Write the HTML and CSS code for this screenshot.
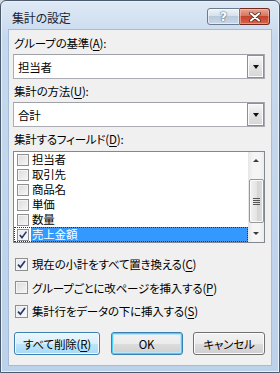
FILE: index.html
```html
<!DOCTYPE html>
<html lang="ja">
  <head>
    <meta charset="UTF-8" />
    <meta name="viewport" content="width=device-width, initial-scale=1.0" />
    <title>集計の設定</title>
    <link rel="stylesheet" href="styles.css">
  </head>
  <body>
    <div class="window">
      <div class="titlebar">
        <span class="title">集計の設定</span>
        <div class="caption">
          <div class="cap-btn help">?</div>
          <div class="cap-btn close">
            <svg width="14" height="10" viewBox="0 0 14 10">
              <path d="M3 1.5 L11 8.5 M11 1.5 L3 8.5" stroke="#4a1a10" stroke-width="3.6" stroke-linecap="round" />
              <path d="M3 1.5 L11 8.5 M11 1.5 L3 8.5" stroke="#fff" stroke-width="2.2" stroke-linecap="round" />
            </svg>
          </div>
        </div>
      </div>

      <div class="client">
        <div class="label">グループの基準(<u>A</u>):</div>
        <div class="combo">
          <span class="combo-text">担当者</span>
          <span class="drop"><span class="tri"></span></span>
        </div>

        <div class="label">集計の方法(<u>U</u>):</div>
        <div class="combo">
          <span class="combo-text">合計</span>
          <span class="drop"><span class="tri"></span></span>
        </div>

        <div class="label">集計するフィールド(<u>D</u>):</div>
        <div class="listbox">
          <ul class="items">
            <li><span class="box small"></span>担当者</li>
            <li><span class="box small"></span>取引先</li>
            <li><span class="box small"></span>商品名</li>
            <li><span class="box small"></span>単価</li>
            <li><span class="box small"></span>数量</li>
            <li class="selected">
              <span class="box small checked">
                <svg width="10" height="10" viewBox="0 0 10 10"><path d="M1.8 5 L4 7.6 L8.4 1.6" fill="none" stroke="#263a66" stroke-width="1.6" /></svg>
              </span>
              <span class="sel-text">売上金額</span>
            </li>
          </ul>
          <div class="scrollbar">
            <div class="arrow up"></div>
            <div class="track">
              <div class="thumb"><span class="grip"></span></div>
            </div>
            <div class="arrow down"></div>
          </div>
        </div>

        <div class="options">
          <div class="option">
            <span class="box checked">
              <svg width="11" height="11" viewBox="0 0 11 11"><path d="M2 5.6 L4.4 8.2 L9 2" fill="none" stroke="#263a66" stroke-width="1.7" /></svg>
            </span>
            現在の小計をすべて置き換える(<u>C</u>)
          </div>
          <div class="option">
            <span class="box"></span>
            グループごとに改ページを挿入する(<u>P</u>)
          </div>
          <div class="option">
            <span class="box checked">
              <svg width="11" height="11" viewBox="0 0 11 11"><path d="M2 5.6 L4.4 8.2 L9 2" fill="none" stroke="#263a66" stroke-width="1.7" /></svg>
            </span>
            集計行をデータの下に挿入する(<u>S</u>)
          </div>
        </div>

        <div class="buttons">
          <button class="btn hot">すべて削除(<u>R</u>)</button>
          <button class="btn default">OK</button>
          <button class="btn">キャンセル</button>
        </div>
      </div>
    </div>
  </body>
</html>
```

FILE: styles.css
```css
html,
body {
  margin: 0;
  height: 100%;
  overflow: hidden;
}
body {
  background: #d6dbe2;
  font-family: "Noto Sans CJK JP", "Noto Sans", sans-serif;
  font-size: 11.5px;
  font-feature-settings: "palt" 1;
  font-variant-east-asian: proportional-width;
  letter-spacing: -0.2px;
  color: #000;
}
u {
  text-decoration-thickness: 1px;
  text-underline-offset: 2px;
}

.window {
  width: 280px;
  height: 373px;
  box-sizing: border-box;
  border: 1px solid #4b5a6c;
  border-radius: 6px 6px 0 0;
  background: linear-gradient(#dfe9f5, #c6d8ed 40px, #bcd2ea);
  display: flex;
  flex-direction: column;
  box-shadow: inset 0 0 0 1px #e8f0f9;
}

.titlebar {
  height: 28px;
  display: flex;
  align-items: flex-start;
  justify-content: space-between;
  padding-left: 11px;
}
.title {
  margin-top: 8px;
  line-height: 18px;
  font-size: 12px;
  color: #1c2430;
}
.caption {
  display: flex;
  margin-top: 7px;
  margin-right: 9px;
}
.cap-btn {
  height: 17px;
  box-sizing: border-box;
  border: 1px solid #6b7b8f;
  display: flex;
  align-items: center;
  justify-content: center;
}
.help {
  width: 33px;
  border-radius: 3px 0 0 3px;
  background: linear-gradient(#eef3f8, #d3dfec 50%, #b9cadd 50%, #c9d8e8);
  color: #fff;
  font-family: "DejaVu Sans", sans-serif;
  font-weight: bold;
  font-size: 12px;
  text-shadow: 0 0 2px #4d5d72, 0 0 1px #4d5d72;
  box-shadow: inset 0 0 0 1px rgba(255, 255, 255, 0.5);
}
.close {
  width: 30px;
  border-color: #6e2a1e;
  border-left: none;
  border-radius: 0 3px 3px 0;
  background: linear-gradient(#e9a594, #d7705a 50%, #c4442b 50%, #d4654b);
  box-shadow: inset 0 0 0 1px rgba(255, 210, 200, 0.45);
}

.client {
  flex: 1;
  margin: 0 7px 6px;
  background: #f0f0f0;
  border: 1px solid #a5bcd6;
  display: flex;
  flex-direction: column;
  padding: 5px 6px 0 4px;
}

.label {
  line-height: 16px;
  padding-left: 1px;
  margin-bottom: 3px;
}

.combo {
  height: 25px;
  box-sizing: border-box;
  border: 1px solid #abadb3;
  border-top-color: #9ea1a7;
  background: #fff;
  display: flex;
  align-items: center;
  justify-content: space-between;
  margin-bottom: 4px;
}
.combo-text {
  padding-left: 4px;
}
.drop {
  width: 17px;
  height: 23px;
  box-sizing: border-box;
  border: 1px solid #8e8f91;
  background: linear-gradient(#f6f6f6, #e4e4e4 50%, #d6d6d6);
  display: flex;
  align-items: center;
  justify-content: center;
  box-shadow: inset 0 0 0 1px #fbfbfb;
}
.tri {
  width: 0;
  height: 0;
  border-left: 3.5px solid transparent;
  border-right: 3.5px solid transparent;
  border-top: 4px solid #111;
  margin-top: 1px;
}

.listbox {
  height: 92px;
  margin-top: 1px;
  box-sizing: border-box;
  border: 1px solid #828790;
  background: #fff;
  display: flex;
}
.items {
  list-style: none;
  margin: 0;
  padding: 0;
  flex: 1;
}
.items li {
  height: 15px;
  line-height: 15px;
  display: flex;
  align-items: center;
  padding-left: 3px;
  box-sizing: border-box;
}
.items li.selected {
  outline: 1px dotted #333;
  outline-offset: -1px;
}
.sel-text {
  background: #3399ff;
  color: #fff;
  flex: 1;
  align-self: stretch;
  margin-left: -1px;
  padding-left: 1px;
}

.box {
  width: 13px;
  height: 13px;
  box-sizing: border-box;
  border: 1px solid #8f8f8f;
  background: linear-gradient(135deg, #dcdcdc, #f6f6f6);
  box-shadow: inset 0 0 0 1px #f4f4f4;
  display: inline-flex;
  align-items: center;
  justify-content: center;
  margin-right: 4px;
  flex-shrink: 0;
}
.box.small {
  width: 12px;
  height: 12px;
  margin-right: 3px;
}
.box.checked {
  background: linear-gradient(135deg, #e2e6ee, #fafbfd);
}

.scrollbar {
  width: 16px;
  display: flex;
  flex-direction: column;
  background: linear-gradient(90deg, #e6e6e6, #f5f5f5 30%, #f5f5f5 70%, #ececec);
}
.arrow {
  height: 17px;
  display: flex;
  align-items: center;
  justify-content: center;
}
.arrow::before {
  content: "";
  width: 0;
  height: 0;
  border-left: 3px solid transparent;
  border-right: 3px solid transparent;
}
.up::before {
  border-bottom: 3px solid #3a3a3a;
}
.down::before {
  border-top: 3px solid #3a3a3a;
}
.track {
  flex: 1;
  display: flex;
  flex-direction: column;
  justify-content: flex-end;
  padding-bottom: 2px;
}
.thumb {
  height: 44px;
  margin: 0 0 0 1px;
  box-sizing: border-box;
  border: 1px solid #979797;
  border-radius: 2px;
  background: linear-gradient(90deg, #f2f2f2, #e4e4e4 50%, #d4d4d4 50%, #dcdcdc);
  box-shadow: inset 0 0 0 1px #fafafa;
  display: flex;
  align-items: center;
  justify-content: center;
}
.grip {
  width: 7px;
  height: 7px;
  background: repeating-linear-gradient(#555 0 1px, transparent 1px 2px);
}

.options {
  display: flex;
  flex-direction: column;
  gap: 7.5px;
  margin-top: 13px;
}
.option {
  display: flex;
  align-items: center;
  height: 16px;
  padding-left: 2px;
}

.buttons {
  display: flex;
  justify-content: space-between;
  padding-left: 1px;
  margin-top: 13px;
}
.btn {
  height: 23px;
  width: 72px;
  padding: 0;
  font: inherit;
  letter-spacing: inherit;
  color: #000;
  border: 1px solid #707070;
  border-radius: 3px;
  background: linear-gradient(#f2f2f2, #ebebeb 50%, #dddddd 50%, #cfcfcf);
  box-shadow: inset 0 0 0 1px #fcfcfc;
}
.btn.hot {
  width: 86px;
  border-color: #3c7fb1;
  background: linear-gradient(#eaf6fd, #d9f0fc 50%, #bee6fd 50%, #a7d9f5);
}
.btn.default {
  border-color: #3c7fb1;
  box-shadow: inset 0 0 0 1px #48d0ff, inset 0 0 0 2px #b9e6fb;
}
```
